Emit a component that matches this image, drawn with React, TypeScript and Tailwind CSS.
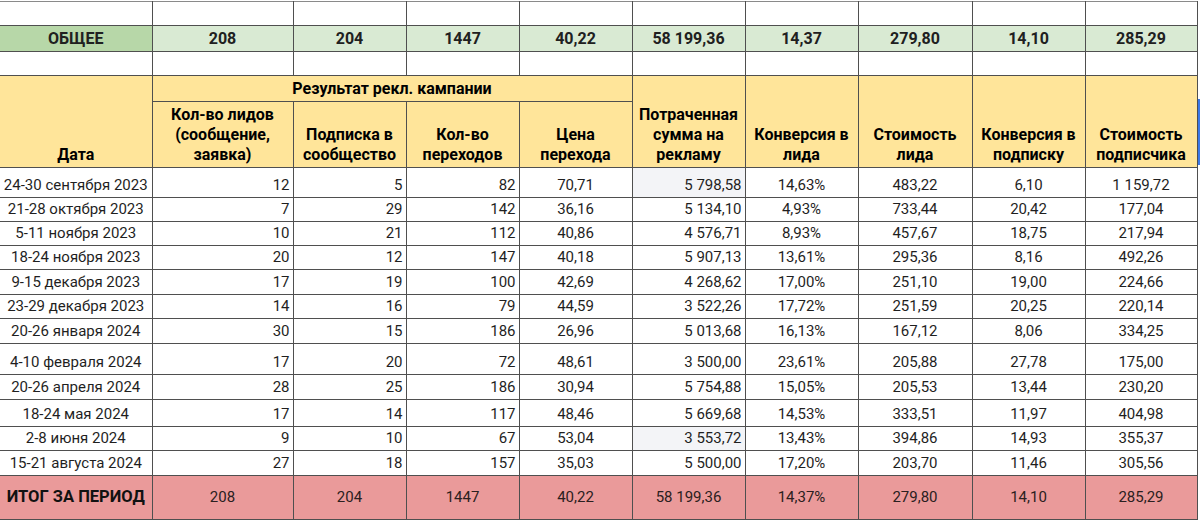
const widths = [152, 141, 113, 113, 113, 113, 113, 114, 113, 112];

const summary = ['208', '204', '1447', '40,22', '58 199,36', '14,37', '279,80', '14,10', '285,29'];

const rows = [
  ['24-30 сентября 2023', '12', '5', '82', '70,71', '5 798,58', '14,63%', '483,22', '6,10', '1 159,72'],
  ['21-28 октября 2023', '7', '29', '142', '36,16', '5 134,10', '4,93%', '733,44', '20,42', '177,04'],
  ['5-11 ноября 2023', '10', '21', '112', '40,86', '4 576,71', '8,93%', '457,67', '18,75', '217,94'],
  ['18-24 ноября 2023', '20', '12', '147', '40,18', '5 907,13', '13,61%', '295,36', '8,16', '492,26'],
  ['9-15 декабря 2023', '17', '19', '100', '42,69', '4 268,62', '17,00%', '251,10', '19,00', '224,66'],
  ['23-29 декабря 2023', '14', '16', '79', '44,59', '3 522,26', '17,72%', '251,59', '20,25', '220,14'],
  ['20-26 января 2024', '30', '15', '186', '26,96', '5 013,68', '16,13%', '167,12', '8,06', '334,25'],
  ['4-10 февраля 2024', '17', '20', '72', '48,61', '3 500,00', '23,61%', '205,88', '27,78', '175,00'],
  ['20-26 апреля 2024', '28', '25', '186', '30,94', '5 754,88', '15,05%', '205,53', '13,44', '230,20'],
  ['18-24 мая 2024', '17', '14', '117', '48,46', '5 669,68', '14,53%', '333,51', '11,97', '404,98'],
  ['2-8 июня 2024', '9', '10', '67', '53,04', '3 553,72', '13,43%', '394,86', '14,93', '355,37'],
  ['15-21 августа 2024', '27', '18', '157', '35,03', '5 500,00', '17,20%', '203,70', '11,46', '305,56'],
];

const totals = ['208', '204', '1447', '40,22', '58 199,36', '14,37%', '279,80', '14,10', '285,29'];

const rowHeights = ['h-[30px]', 'h-[24px]', 'h-[24px]', 'h-[24px]', 'h-[25px]', 'h-[24px]', 'h-[25px]', 'h-[31px]', 'h-[25px]', 'h-[27px]', 'h-[24px]', 'h-[25px]'];

// which columns are right-aligned in data rows
const rightCols = [1, 2, 3, 5];
// spent-sum cells that carry a light selection tint
const tinted = [0, 10];

const line = 'border border-[#4f4f4f]';

export default function App() {
  return (
    <div className="relative w-[1200px] h-[522px] bg-white pt-px font-['Roboto','Liberation_Sans',sans-serif] text-[15px] text-[#1f1f1f]">
      <table className="table-fixed border-collapse w-[1197px]">
        <colgroup>
          {widths.map((w, i) => (
            <col key={i} style={{ width: w }} />
          ))}
        </colgroup>
        <tbody>
          <tr>
            {widths.map((_, i) => (
              <td key={i} className={`${line} h-[24px] ${i === 0 ? 'border-l-0' : ''} border-t-[#8a8a8a]`} />
            ))}
          </tr>
          <tr className="font-bold text-[16px] text-[#202020]">
            <td className={`${line} border-l-0 h-[26px] bg-[#b7d7a8] text-center`}>ОБЩЕЕ</td>
            {summary.map((v, i) => (
              <td key={i} className={`${line} bg-[#d9ead3] text-center`}>{v}</td>
            ))}
          </tr>
          <tr>
            {widths.map((_, i) => (
              <td key={i} className={`${line} h-[24px] ${i === 0 ? 'border-l-0' : ''}`} />
            ))}
          </tr>
          <tr className="bg-[#ffe59a] font-bold text-[16px] text-black leading-[20px]">
            <td rowSpan={2} className={`${line} border-l-0 align-bottom text-center pb-[2px]`}>Дата</td>
            <td colSpan={4} className={`${line} h-[26px] text-center`}>Результат рекл. кампании</td>
            <td rowSpan={2} className={`${line} align-bottom text-center pb-[2px]`}>Потраченная<br />сумма на<br />рекламу</td>
            <td rowSpan={2} className={`${line} align-bottom text-center pb-[2px]`}>Конверсия в<br />лида</td>
            <td rowSpan={2} className={`${line} align-bottom text-center pb-[2px]`}>Стоимость<br />лида</td>
            <td rowSpan={2} className={`${line} align-bottom text-center pb-[2px]`}>Конверсия в<br />подписку</td>
            <td rowSpan={2} className={`${line} align-bottom text-center pb-[2px]`}>Стоимость<br />подписчика</td>
          </tr>
          <tr className="bg-[#ffe59a] font-bold text-[16px] text-black leading-[20px]">
            <td className={`${line} h-[66px] align-bottom text-center pb-[2px]`}>Кол-во лидов<br />(сообщение,<br />заявка)</td>
            <td className={`${line} align-bottom text-center pb-[2px]`}>Подписка в<br />сообщество</td>
            <td className={`${line} align-bottom text-center pb-[2px]`}>Кол-во<br />переходов</td>
            <td className={`${line} align-bottom text-center pb-[2px]`}>Цена<br />перехода</td>
          </tr>
          {rows.map((r, ri) => (
            <tr key={ri} className="leading-[18px]">
              {r.map((v, ci) => (
                <td
                  key={ci}
                  className={`${line} ${ci === 0 ? `border-l-0 ${rowHeights[ri]}` : ''} align-bottom pb-[3px] whitespace-nowrap ${
                    rightCols.includes(ci) ? 'text-right pr-[3px]' : 'text-center'
                  } ${ci === 5 && tinted.includes(ri) ? 'bg-[#f3f4f7]' : ''}`}
                >
                  {v}
                </td>
              ))}
            </tr>
          ))}
          <tr className="bg-[#ea9a9a] text-[#2a2020]">
            <td className={`${line} border-l-0 h-[44px] text-center font-bold text-[16.5px] text-[#111]`}>ИТОГ ЗА ПЕРИОД</td>
            {totals.map((v, i) => (
              <td key={i} className={`${line} text-center`}>{v}</td>
            ))}
          </tr>
        </tbody>
      </table>
      <div className="absolute left-[1198px] top-[99px] w-[2px] h-[66px] bg-[#3b78e7]" />
    </div>
  );
}
